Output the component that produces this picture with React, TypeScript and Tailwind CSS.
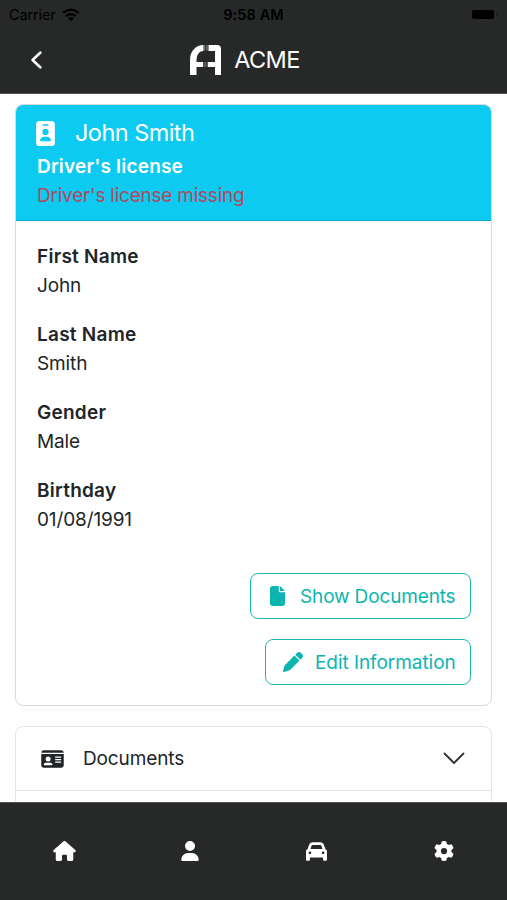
import React from "react";
import { FaHouse, FaUser, FaCar, FaGear, FaFile, FaPen, FaIdBadge, FaIdCard } from "react-icons/fa6";

const fields = [
  { label: "First Name", value: "John" },
  { label: "Last Name", value: "Smith" },
  { label: "Gender", value: "Male" },
  { label: "Birthday", value: "01/08/1991" },
];

function Logo() {
  return (
    <svg width="32" height="32" viewBox="0 0 32 32" fill="none">
      <path d="M0 31V16C0 7 6 1 13.5 1V7C8.500 7 6.500 11 6.500 18H13V23H6.500V31Z" fill="#fff" />
      <path d="M18.500 1H27Q31 1 31 5V31H25V23H18V18H25V7H18.500Z" fill="#fff" />
      <path d="M14.500 1V6.500M16.100 1V6.500M17.700 1V6.500M14 18V23M15.700 18V23M17.300 18V23" stroke="#929494" strokeWidth=".7" />
    </svg>
  );
}

export default function App() {
  return (
    <div className="flex h-[900px] w-[507px] flex-col overflow-hidden bg-white font-[Inter,sans-serif] text-[19px] leading-[29.3px] tracking-[-0.12px] text-[#212529]">
      <header className="h-[94px] shrink-0 border-b border-[#505252] bg-[#272929] text-black">
        <div className="grid h-[28px] grid-cols-3 items-center pl-[9px] pr-[9px] text-[14.5px]">
          <div className="flex items-center gap-[6px]">
            <span>Carrier</span>
            <svg width="18" height="14" viewBox="0 0 19 14" fill="none" stroke="#000" strokeWidth="2.4">
              <path d="M1.2 4.8Q9.5-2 17.8 4.8M4.3 8.2Q9.5 4 14.7 8.2" />
              <path d="M6.4 10.3Q9.5 8 12.6 10.3L9.5 13.5Z" fill="#000" stroke="none" />
            </svg>
          </div>
          <span className="text-center font-semibold tracking-[0.1px]">9:58 AM</span>
          <div className="flex items-center justify-end gap-[2px]">
            <span className="h-[9px] w-[22px] rounded-[2px] bg-black" />
            <span className="h-[4px] w-[2px] rounded-r bg-[#1d1e1e]" />
          </div>
        </div>
        <div className="grid h-[64px] grid-cols-[1fr_auto_1fr] items-center text-white">
          <svg className="ml-[30px]" width="13" height="20" viewBox="0 0 13 20" fill="none" stroke="#fff" strokeWidth="2.5" strokeLinecap="round" strokeLinejoin="round">
            <path d="M10.5 2.5L2.5 10L10.5 17.5" />
          </svg>
          <div className="flex items-center gap-[12px] pr-[17px]">
            <Logo />
            <span className="text-[23.5px] tracking-[-0.65px]">ACME</span>
          </div>
        </div>
      </header>

      <main className="min-h-0 flex-1 overflow-hidden px-[15px] pt-[10px]">
        <section className="h-[602px] rounded-[8px] border border-[#d8d9da]">
          <div className="h-[116px] rounded-t-[7px] border-b border-[#0eabd0] bg-[#0dcaf0] pl-[21px] pt-[11px] text-white">
            <div className="mb-[2px] flex h-[34px] items-center">
              <FaIdBadge className="-ml-px h-[25px] w-[19px]" />
              <h1 className="ml-[20px] text-[23.5px] tracking-[-0.55px]">John Smith</h1>
            </div>
            <div className="font-semibold tracking-[0.2px]">Driver's license</div>
            <div className="tracking-[-0.23px] text-[#b04a60]">Driver's license missing</div>
          </div>
          <dl className="flex flex-col gap-[19.6px] pl-[21px] pt-[20.6px]">
            {fields.map((f) => (
              <div key={f.label}>
                <dt className="font-semibold tracking-[0.25px]">{f.label}</dt>
                <dd>{f.value}</dd>
              </div>
            ))}
          </dl>
          <div className="mt-[38.6px] flex flex-col items-end gap-[20px] pr-[20px] text-[#0cb5b0]">
            <button className="flex h-[46px] w-[221px] items-center rounded-[8px] border border-[#20bab5] pl-[19px]">
              <FaFile className="h-[20px] w-[15px]" />
              <span className="ml-[15px] whitespace-nowrap tracking-[-0.15px]">Show Documents</span>
            </button>
            <button className="flex h-[46px] w-[206px] items-center rounded-[8px] border border-[#20bab5] pl-[17px]">
              <FaPen className="size-[20px]" />
              <span className="ml-[12px] whitespace-nowrap tracking-[-0.06px]">Edit Information</span>
            </button>
          </div>
        </section>

        <section className="mt-[20px] h-[120px] rounded-t-[8px] border border-[#e2e4e5]">
          <div className="flex h-[64px] items-center border-b border-[#e2e4e5] pl-[25px] pr-[26px]">
            <FaIdCard className="h-[20px] w-[23px]" />
            <span className="ml-[19px] flex-1">Documents</span>
            <svg width="22" height="13" viewBox="0 0 22 13" fill="none" stroke="#303336" strokeWidth="1.8" strokeLinecap="round" strokeLinejoin="round">
              <path d="M1.5 1.5L11 11L20.5 1.5" />
            </svg>
          </div>
        </section>
      </main>

      <nav className="grid h-[98px] shrink-0 grid-cols-4 items-center justify-items-center border-t border-[#505252] bg-[#272929] pb-px text-white">
        <FaHouse className="ml-[2px] h-[20px] w-[23px]" />
        <FaUser className="size-[20px]" />
        <FaCar className="size-[21px]" />
        <FaGear className="size-[20px]" />
      </nav>
    </div>
  );
}
